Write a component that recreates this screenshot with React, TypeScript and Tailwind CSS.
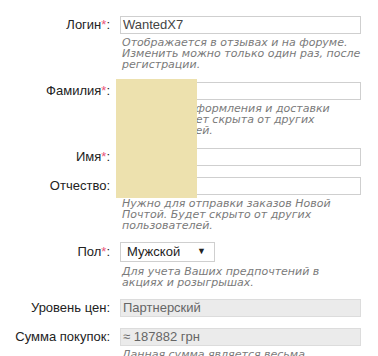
import React from 'react'

const labelFont = { fontFamily: '"Liberation Sans", Arial, sans-serif' }

function Label({ text, required }: { text: string; required?: boolean }) {
  return (
    <div className="w-[120px] shrink-0 pr-[10px] text-right text-[13px] text-[#222]" style={labelFont}>
      {text}
      {required && <span className="text-[#e8557a]">*</span>}:
    </div>
  )
}

function Hint({ children }: { children: React.ReactNode }) {
  return (
    <div
      className="mt-[3px] pl-[2px] text-[11px] italic leading-[11px] text-[#7a7a7a]"
      style={{ fontFamily: '"DejaVu Sans", Verdana, sans-serif' }}
    >
      {children}
    </div>
  )
}

function Field({
  label,
  required,
  value,
  disabled,
  hint,
  className = '',
}: {
  label: string
  required?: boolean
  value?: string
  disabled?: boolean
  hint?: React.ReactNode
  className?: string
}) {
  return (
    <div className={`flex ${className}`}>
      <div className="flex h-[18px] items-center">
        <Label text={label} required={required} />
      </div>
      <div className="w-[241px]">
        <div
          className={`flex h-[18px] items-center border px-[2px] text-[13px] ${
            disabled ? 'border-[#dcdcdc] bg-[#ebebeb] text-[#666]' : 'border-[#cfcfcf] bg-white text-[#444]'
          }`}
          style={labelFont}
        >
          {value}
        </div>
        {hint && <Hint>{hint}</Hint>}
      </div>
    </div>
  )
}

export default function App() {
  return (
    <div className="relative h-[356px] w-[378px] overflow-hidden bg-white pt-4">
      <Field
        label="Логин"
        required
        value="WantedX7"
        className="mb-3"
        hint={
          <>
            Отображается в отзывах и на форуме.
            <br />
            Изменить можно только один раз, после
            <br />
            регистрации.
          </>
        }
      />
      <Field
        label="Фамилия"
        required
        className="mb-3"
        hint={
          <>
            Нужна для оформления и доставки
            <br />
            заказов. Будет скрыта от других
            <br />
            пользователей.
          </>
        }
      />
      <Field label="Имя" required className="mb-[11px]" />
      <Field
        label="Отчество"
        className="mb-[11px]"
        hint={
          <>
            Нужно для отправки заказов Новой
            <br />
            Почтой. Будет скрыто от других
            <br />
            пользователей.
          </>
        }
      />

      <div className="mb-[11px] flex">
        <div className="flex h-[20px] items-center">
          <Label text="Пол" required />
        </div>
        <div className="w-[241px]">
          <div
            className="flex h-[20px] w-[95px] items-center justify-between border border-[#cfcfcf] bg-white pl-[6px] pr-[8px] text-[13px] text-[#222]"
            style={labelFont}
          >
            <span>Мужской</span>
            <span className="text-[9px]">▼</span>
          </div>
          <div className="mt-[4px]">
            <Hint>
              Для учета Ваших предпочтений в
              <br />
              акциях и розыгрышах.
            </Hint>
          </div>
        </div>
      </div>

      <Field label="Уровень цен" value="Партнерский" disabled className="mb-[11px]" />
      <Field label="Сумма покупок" value="≈ 187882 грн" disabled hint={<>Данная сумма является весьма</>} />

      {/* redaction block */}
      <div className="absolute left-[116px] top-[79px] h-[119px] w-[81px] bg-[#ede1ae]" />
    </div>
  )
}
